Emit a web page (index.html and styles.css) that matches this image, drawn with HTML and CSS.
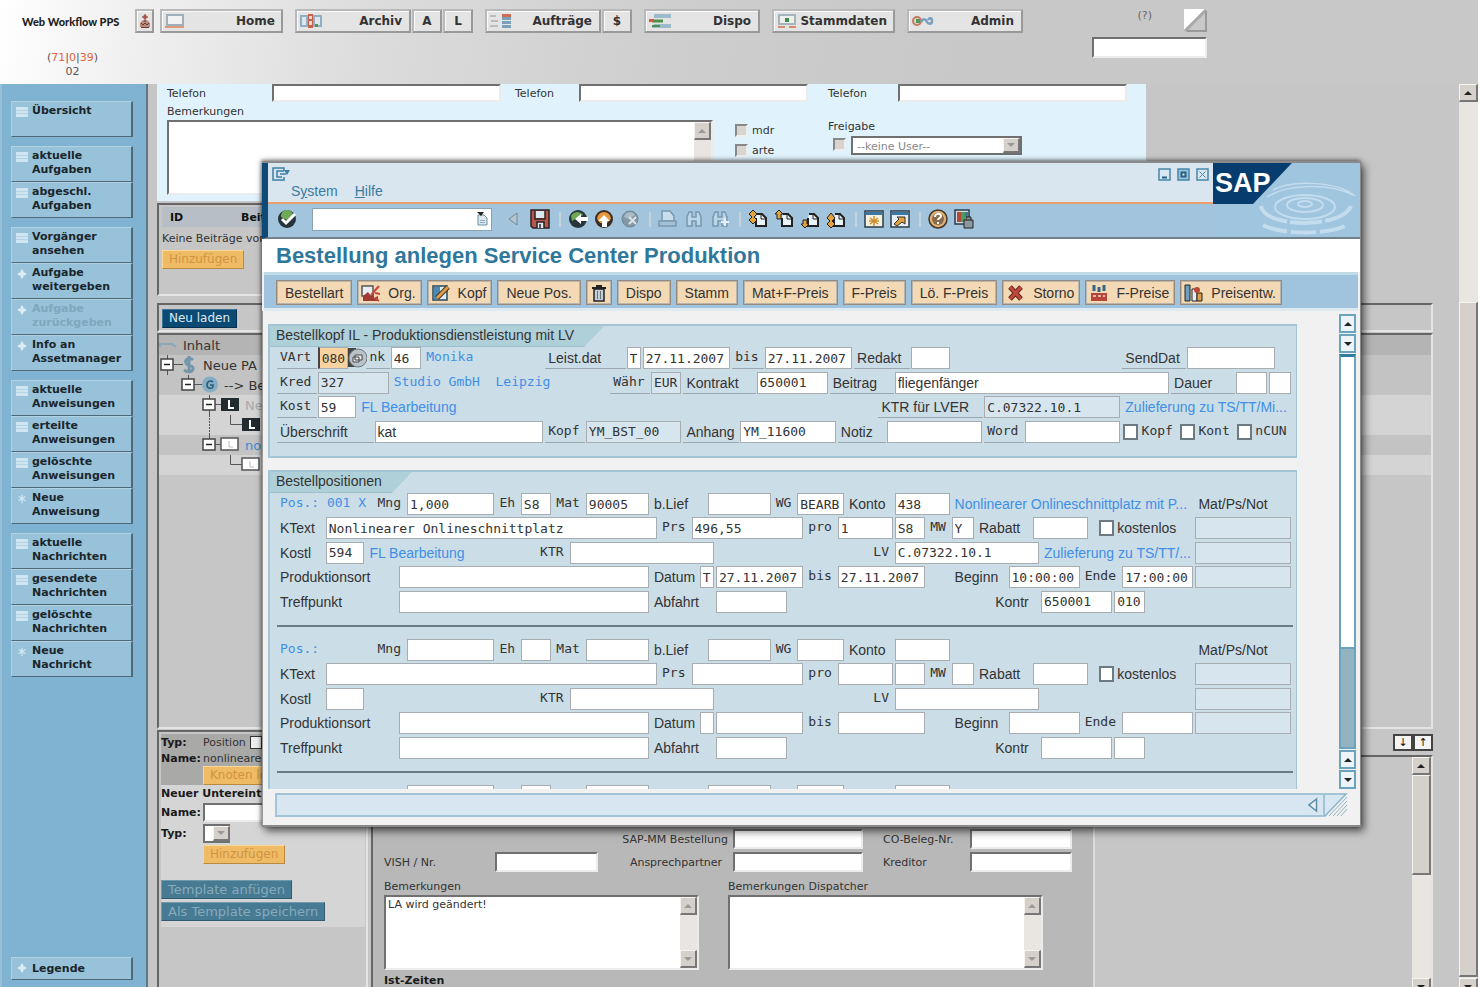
FILE: index.html
```html
<!DOCTYPE html>
<html lang="de">
<head>
    <meta charset="utf-8">
    <title>Web Workflow PPS</title>
    <link rel="stylesheet" href="styles.css">
</head>
<body>
<svg class="sprite">
    <symbol id="i-list" viewBox="0 0 12 10"><path fill="#cfe6f2" d="M0 0h12v10H0z"/><path stroke="#b2d4e6" d="M0 3.5h12M0 6.5h12"/></symbol>
    <symbol id="i-plus" viewBox="0 0 12 12"><path fill="#dcecf4" d="M5 1h2l1 3 3 1v2l-3 1-1 3H5L4 8 1 7V5l3-1z"/></symbol>
    <symbol id="i-star" viewBox="0 0 12 12"><path stroke="#d4e8f3" stroke-width="1.5" d="M6 1v10M2 3l8 5M10 3L2 8"/></symbol>
    <symbol id="a-up" viewBox="0 0 10 10"><path fill="currentColor" d="M1 7l4-4 4 4z"/></symbol>
    <symbol id="a-down" viewBox="0 0 10 10"><path fill="currentColor" d="M1 3l4 4 4-4z"/></symbol>
    <symbol id="page" viewBox="0 0 20 20"><path fill="#e9f3fa" stroke="#222" stroke-width="2" d="M9 5h5l4 4v8H8V9"/><path fill="none" stroke="#222" d="M13 5v5h5"/></symbol>
    <symbol id="binoc" viewBox="0 0 20 20"><path fill="#bcd6e7" stroke="#7698b0" stroke-width="1.5" d="M3 17V8l2-5h3v5h4V3h3l2 5v9h-5v-5H8v5z"/></symbol>
</svg>

<header class="top">
    <div class="brand">
        <h1>Web Workflow PPS</h1>
        <p>(<b>71</b>|<b>0</b>|<b>39</b>)<br>02</p>
    </div>
    <nav class="topnav">
        <button class="tb tb-icon" title="Login"><svg width="12" height="16" viewBox="0 0 12 16"><path fill="#b98a7c" d="M1 10l3-3h4l3 3v4H1z"/><path stroke="#6b3a32" fill="none" d="M6 1v8M3 4h6M2 14.500h8M2 10l2 2 2-2 2 2 2-2"/><circle cx="6" cy="4" r="2" fill="#a85248"/></svg></button>
        <div class="tb-group home">
            <button class="tb wide"><svg width="20" height="16" viewBox="0 0 20 16"><path fill="#f2f2f2" stroke="#9db0bb" stroke-width="2" d="M2 2h16v10H2z"/><path stroke="#dc9a78" stroke-width="2" d="M0 14h19"/></svg><span>Home</span></button>
        </div>
        <div class="tb-group">
            <button class="tb"><svg width="22" height="16" viewBox="0 0 22 16"><path fill="#8fb0c4" d="M0 2h22v12H0z"/><path fill="#dfe7ec" d="M2 4h4v8H2zm13 0h5v8h-5z"/><path fill="#c8604c" d="M8 1h5v14H8z"/><path fill="#f0d8d0" d="M9 3h3v3H9zm0 5h3v4H9z"/><path fill="#4b9b50" d="M15 11h3v3h-3z"/></svg><span>Archiv</span></button>
            <button class="tb tb-letter">A</button>
            <button class="tb tb-letter">L</button>
        </div>
        <div class="tb-group">
            <button class="tb"><svg width="22" height="16" viewBox="0 0 22 16"><path stroke="#bbb" stroke-width="2" d="M0 3h6M1 8h7M0 13h8"/><path fill="#7d9fb8" d="M12 4h9v11h-9z"/><path fill="#d06a55" d="M12 1h9v3h-9z"/><path stroke="#dde8ef" d="M12 7.500h9M12 11.500h9"/></svg><span>Aufträge</span></button>
            <button class="tb tb-letter">$</button>
        </div>
        <div class="tb-group">
            <button class="tb"><svg width="22" height="16" viewBox="0 0 22 16"><path fill="#9bbacb" d="M5 1h17v4H5zm0 10h17v4H3z"/><path stroke="#49914c" stroke-width="3" d="M3 8h11"/><path stroke="#49914c" stroke-width="2" d="M3 13h8"/><path fill="#d05848" d="M0 6h5v3H0z"/></svg><span>Dispo</span></button>
        </div>
        <div class="tb-group">
            <button class="tb wide"><svg width="20" height="16" viewBox="0 0 20 16"><path fill="#eee" stroke="#a4b3bc" stroke-width="2" d="M2 2h16v9H2z"/><path stroke="#d98a72" stroke-width="2" d="M1 14h7m4 0h7"/><path fill="#3d8d42" d="M8 5h4v4H8z"/></svg><span>Stammdaten</span></button>
        </div>
        <div class="tb-group">
            <button class="tb"><svg width="22" height="16" viewBox="0 0 22 16"><circle cx="5" cy="8" r="4" fill="#dcd8cc" stroke="#c47a62" stroke-width="2"/><path fill="#4b9b50" d="M4 6h4v4H4z"/><path fill="none" stroke="#7a9fc0" stroke-width="2.500" d="M9 9c3-5 5-2 6 0s5 3 5-1-3-3-4-1"/></svg><span>Admin</span></button>
        </div>
    </nav>
    <div class="top-right">
        <a class="help" href="#">(?)</a>
        <button class="corner" title="Suche"><svg width="24" height="24" viewBox="0 0 24 24"><path fill="#fff" d="M1 1h21L1 22z"/><path stroke="#a9a9a9" stroke-width="3" d="M23 2L2 23"/><path stroke="#999" stroke-width="2" d="M23 3v20H4" fill="none"/></svg></button>
        <input class="inset" type="text" aria-label="Suche">
    </div>
</header>

<div class="workspace">
    <nav class="side">
        <div class="side-group">
            <button><svg><use href="#i-list"/></svg>Übersicht<br>&nbsp;</button>
        </div>
        <div class="side-group">
            <button><svg><use href="#i-list"/></svg>aktuelle<br>Aufgaben</button>
            <button><svg><use href="#i-list"/></svg>abgeschl.<br>Aufgaben</button>
        </div>
        <div class="side-group">
            <button><svg><use href="#i-list"/></svg>Vorgänger<br>ansehen</button>
            <button><svg><use href="#i-plus"/></svg>Aufgabe<br>weitergeben</button>
            <button disabled><svg><use href="#i-plus"/></svg>Aufgabe<br>zurückgeben</button>
            <button><svg><use href="#i-plus"/></svg>Info an<br>Assetmanager</button>
        </div>
        <div class="side-group">
            <button><svg><use href="#i-list"/></svg>aktuelle<br>Anweisungen</button>
            <button><svg><use href="#i-list"/></svg>erteilte<br>Anweisungen</button>
            <button><svg><use href="#i-list"/></svg>gelöschte<br>Anweisungen</button>
            <button><svg><use href="#i-star"/></svg>Neue<br>Anweisung</button>
        </div>
        <div class="side-group">
            <button><svg><use href="#i-list"/></svg>aktuelle<br>Nachrichten</button>
            <button><svg><use href="#i-list"/></svg>gesendete<br>Nachrichten</button>
            <button><svg><use href="#i-list"/></svg>gelöschte<br>Nachrichten</button>
            <button><svg><use href="#i-star"/></svg>Neue<br>Nachricht</button>
        </div>
        <div class="side-group legend">
            <button><svg><use href="#i-plus"/></svg>Legende</button>
        </div>
    </nav>

    <main class="frames">
        <section class="contact">
            <div class="phones">
                <label for="tel1">Telefon</label><input class="inset" id="tel1" type="text">
                <label for="tel2">Telefon</label><input class="inset" id="tel2" type="text">
                <label for="tel3">Telefon</label><input class="inset" id="tel3" type="text">
            </div>
            <div class="notes">
                <div class="notes-text">
                    <label for="bem">Bemerkungen</label>
                    <div class="area inset">
                        <textarea id="bem"></textarea>
                        <div class="scroll off"><i><svg><use href="#a-up"/></svg></i><b></b><i><svg><use href="#a-down"/></svg></i></div>
                    </div>
                </div>
                <div class="notes-checks">
                    <label><input type="checkbox" class="old-check">mdr</label>
                    <label><input type="checkbox" class="old-check">arte</label>
                </div>
                <div class="notes-free">
                    <label for="free">Freigabe</label>
                    <div class="free-row">
                        <input type="checkbox" class="old-check" aria-label="Freigabe aktiv">
                        <div class="drop inset"><select id="free"><option>--keine User--</option></select><i><svg><use href="#a-down"/></svg></i></div>
                    </div>
                </div>
            </div>
        </section>

        <section class="frame articles">
            <table>
                <tr><th class="c-id">ID</th><th>Beitrag</th></tr>
                <tr><td colspan="2">Keine Beiträge vorhanden</td></tr>
            </table>
            <button class="btn-orange" disabled>Hinzufügen</button>
        </section>

        <section class="frame reload"><button class="btn-navy">Neu laden</button></section>

        <section class="frame tree">
            <div class="tree-row head"><svg width="18" height="20" viewBox="0 0 18 20"><path fill="none" stroke="#8ba7b8" stroke-width="2" d="M1 12V9h12l4 3"/></svg><span>Inhalt</span></div>
            <div class="tree-row"><svg width="38" height="20" viewBox="0 0 38 20"><path stroke="#555" d="M8.500 0v20M14 9.500h10"/><path fill="#fff" stroke="#444" stroke-width="1.500" d="M2 4h12v11H2z"/><path stroke="#222" stroke-width="1.500" d="M5 9.500h6"/><path fill="none" stroke="#7396ab" stroke-width="3" d="M34 5c-3-3-9-1-7 3s8 2 7 6-6 3-9 1M30 1v17"/></svg><span>Neue PA</span></div>
            <div class="tree-row"><svg class="ind1" width="38" height="20" viewBox="0 0 38 20"><path stroke="#555" d="M8.500 0v4M14 9.500h8"/><path fill="#fff" stroke="#444" stroke-width="1.500" d="M2 4h12v11H2z"/><path stroke="#222" stroke-width="1.500" d="M5 9.500h6"/><circle cx="30" cy="9.500" r="8" fill="#85adc4"/><path fill="none" stroke="#2b5877" stroke-width="1.500" d="M33 7c-2-2-6-1-6 3s5 4 6 2v-2h-3"/></svg><span>--&gt; Beitrag</span></div>
            <div class="tree-row light"><svg class="ind2" width="38" height="20" viewBox="0 0 38 20"><path stroke="#555" d="M8.500 0v20M14 9.500h6"/><path fill="#fff" stroke="#444" stroke-width="1.500" d="M2 4h12v11H2z"/><path stroke="#222" stroke-width="1.500" d="M5 9.500h6"/><path fill="#222b30" d="M20 3h18v13H20z"/><path fill="none" stroke="#fff" stroke-width="2" d="M28 5v8h5"/></svg><span class="dim">Neu</span></div>
            <div class="tree-row light"><svg class="ind2" width="59" height="20" viewBox="0 0 59 20"><path stroke="#555" stroke-dasharray="2 1" d="M8.500 0v20"/><path fill="none" stroke="#555" d="M29.500 0v9.500H41"/><path fill="#222b30" d="M41 3h18v13H41z"/><path fill="none" stroke="#fff" stroke-width="2" d="M49 5v8h5"/></svg></div>
            <div class="tree-row"><svg class="ind2" width="38" height="20" viewBox="0 0 38 20"><path stroke="#555" d="M8.500 0v4M14 9.500h6"/><path fill="#fff" stroke="#444" stroke-width="1.500" d="M2 4h12v11H2z"/><path stroke="#222" stroke-width="1.500" d="M5 9.500h6"/><path fill="#fff" stroke="#555" stroke-width="1.500" d="M20 3h17v12H20z"/><path fill="none" stroke="#bbb" d="M28 6v6h4"/></svg><a href="#">nonlinear</a></div>
            <div class="tree-row light"><svg class="ind3" width="38" height="20" viewBox="0 0 38 20"><path fill="none" stroke="#555" d="M8.500 0v9.500H20"/><path fill="#fff" stroke="#555" stroke-width="1.500" d="M20 3h17v12H20z"/><path fill="none" stroke="#bbb" d="M28 6v6h4"/></svg></div>
        </section>

        <div class="lower">
            <section class="frame node">
                <div class="node-form">
                    <div class="node-top">
                        <b>Typ:</b><div class="pos-line">Position <input type="checkbox" class="node-check" aria-label="Position"></div>
                        <b>Name:</b><span>nonlinearer</span>
                        <span></span><button class="btn-orange" disabled>Knoten löschen</button>
                    </div>
                    <h2>Neuer Untereintrag</h2>
                    <div class="node-new">
                        <label for="nname">Name:</label><input class="inset" id="nname" type="text">
                        <label for="ntyp">Typ:</label><div class="drop inset small"><select id="ntyp"></select><i><svg><use href="#a-down"/></svg></i></div>
                        <span></span><button class="btn-orange" disabled>Hinzufügen</button>
                    </div>
                    <button class="btn-teal" disabled>Template anfügen</button>
                    <button class="btn-teal" disabled>Als Template speichern</button>
                </div>
            </section>
            <section class="detail">
                <div class="detail-bar"><button title="runter">↓</button><button title="hoch">↑</button></div>
                <div class="frame detail-frame">
                    <div class="detail-form">
                        <div class="detail-grid">
                            <span></span><span></span>
                            <label class="r" for="mm">SAP-MM Bestellung</label><input class="inset" id="mm" type="text">
                            <label class="third" for="co">CO-Beleg-Nr.</label><input class="inset" id="co" type="text">
                            <label for="vish">VISH / Nr.</label><input class="inset" id="vish" type="text">
                            <label class="r partner" for="ap">Ansprechpartner</label><input class="inset" id="ap" type="text">
                            <label class="third" for="kr">Kreditor</label><input class="inset" id="kr" type="text">
                        </div>
                        <div class="detail-notes">
                            <div>
                                <label for="b1">Bemerkungen</label>
                                <div class="area inset"><textarea id="b1">LA wird geändert!</textarea><div class="scroll off"><i><svg><use href="#a-up"/></svg></i><b></b><i><svg><use href="#a-down"/></svg></i></div></div>
                            </div>
                            <div>
                                <label for="b2">Bemerkungen Dispatcher</label>
                                <div class="area inset"><textarea id="b2"></textarea><div class="scroll off"><i><svg><use href="#a-up"/></svg></i><b></b><i><svg><use href="#a-down"/></svg></i></div></div>
                            </div>
                        </div>
                        <h2>Ist-Zeiten</h2>
                    </div>
                    <div class="scroll inner"><i><svg><use href="#a-up"/></svg></i><em></em><b></b><i><svg><use href="#a-down"/></svg></i></div>
                </div>
            </section>
        </div>
    </main>
    <div class="scroll outer"><i><svg><use href="#a-up"/></svg></i><b></b><em></em><i><svg><use href="#a-down"/></svg></i></div>
</div>

<!-- SAP window -->
<div class="sap">
    <div class="sap-head">
        <div class="sap-menu">
            <svg class="sysicon" width="19" height="14" viewBox="0 0 19 14"><path fill="none" stroke="#3b80a6" stroke-width="1.500" d="M12 4V1H1v12h11v-3M12 4H5v6h5M8 7h6"/><path fill="#3b80a6" d="M12 3h6l-3 5z"/></svg>
            <div class="menu-items"><a href="#">S<u>y</u>stem</a><a href="#"><u>H</u>ilfe</a></div>
            <div class="winbtns">
                <button title="Minimieren"><svg width="13" height="13"><path fill="none" stroke="#4587ab" stroke-width="1.500" d="M1 1h11v11H1z"/><path stroke="#245f86" stroke-width="2" d="M4 9.500h5"/></svg></button>
                <button title="Maximieren"><svg width="13" height="13"><path fill="#9fc3d7" stroke="#4587ab" stroke-width="1.500" d="M1 1h11v11H1z"/><path fill="#e4eff5" stroke="#245f86" stroke-width="2" d="M4.500 4.500h4v4h-4z"/></svg></button>
                <button title="Schließen"><svg width="13" height="13"><path fill="none" stroke="#4587ab" stroke-width="1.500" d="M1 1h11v11H1z"/><path stroke="#4587ab" d="M3.500 3.500l6 6m0-6l-6 6"/></svg></button>
            </div>
        </div>
        <div class="sap-tools">
            <button title="Enter"><svg viewBox="0 0 20 20"><circle cx="10" cy="10" r="9" fill="#26343c"/><path fill="#6fa955" d="M4 8a6 6 0 0112-2l-6 5z"/><path fill="none" stroke="#fff" stroke-width="3" d="M5 10l4 4 9-9"/></svg></button>
            <div class="cmd"><input type="text" aria-label="Befehl"><svg width="12" height="14" viewBox="0 0 12 14"><path fill="#dce8ef" stroke="#6d8fa3" d="M2 3h6l3 3v7H2z"/><path stroke="#8fb0c3" d="M4 8.500h5M4 10.500h5"/><path fill="#222" d="M1 0h7L5 4z"/></svg></div>
            <button class="narrow" title="Zurück"><svg viewBox="0 0 10 20"><path fill="#b6c5ce" stroke="#6f8796" d="M9 4v12L1 10z"/></svg></button>
            <button title="Sichern"><svg viewBox="0 0 20 20"><path fill="#b8574c" stroke="#2a2222" stroke-width="1.500" d="M1 1h18v18H3l-2-2z"/><path fill="#dce8ef" d="M5 2h10v7H5zm2 11h7v6H7z"/><path stroke="#2a2222" stroke-width="1.500" fill="none" d="M5 2v8h10V2M7 19v-6h7v6M10 15v4"/></svg></button>
            <s></s>
            <button title="Zurück"><svg viewBox="0 0 20 20"><circle cx="10" cy="10" r="9" fill="#26343c"/><path fill="#6fa955" d="M3 7a7 7 0 0112-1L9 9l-5 3z"/><path fill="#fff" d="M7 10l6-5v3h7v4h-7v3z"/></svg></button>
            <button title="Beenden"><svg viewBox="0 0 20 20"><circle cx="10" cy="10" r="9" fill="#3a2c22"/><path fill="#e8963c" d="M3 10a7 7 0 0114 0l-4 4H6z"/><path fill="#fff" d="M10 6l6 6h-3v6H8v-6H4z"/></svg></button>
            <button title="Abbrechen"><svg viewBox="0 0 20 20"><circle cx="10" cy="10" r="8" fill="#8498a5" stroke="#6f8796"/><path fill="#a9bcc7" d="M4 8a6 6 0 0111-2l-6 4z"/><path stroke="#d8e4eb" stroke-width="2" d="M9 8l7 7m0-7l-7 7"/></svg></button>
            <s></s>
            <button title="Drucken"><svg viewBox="0 0 20 20"><path fill="#c9deeb" stroke="#7698b0" stroke-width="1.500" d="M4 2h8l4 5v5H4z"/><path fill="#a5c1d3" stroke="#7698b0" stroke-width="1.500" d="M1 12h17v5H1z"/></svg></button>
            <button title="Suchen"><svg><use href="#binoc"/></svg></button>
            <button title="Weitersuchen"><svg viewBox="0 0 20 20"><use href="#binoc" width="20" height="20"/><path stroke="#e4f0f7" stroke-width="2" d="M15 9v8m-4-4h8"/></svg></button>
            <s></s>
            <button title="Erste Seite"><svg viewBox="0 0 20 20"><use href="#page" width="20" height="20"/><path fill="#e5a33c" stroke="#222" d="M5 1l4 4-3 3 3 3-4 4-4-4 3-3-3-3z"/></svg></button>
            <button title="Vorige Seite"><svg viewBox="0 0 20 20"><use href="#page" width="20" height="20"/><path fill="#e5a33c" stroke="#222" d="M5 1l4 4H7v5H3V5H1z"/></svg></button>
            <button title="Nächste Seite"><svg viewBox="0 0 20 20"><use href="#page" width="20" height="20"/><path fill="#e5a33c" stroke="#222" d="M5 19l4-4H7v-4H3v4H1z"/></svg></button>
            <button title="Letzte Seite"><svg viewBox="0 0 20 20"><use href="#page" width="20" height="20"/><path fill="#e5a33c" stroke="#222" d="M5 19l4-4-3-3 3-3-4-5-4 5 3 3-3 3z"/></svg></button>
            <s></s>
            <button title="Neuer Modus"><svg viewBox="0 0 20 20"><path fill="#f4f0df" stroke="#2b3d4a" stroke-width="1.500" d="M1 2h18v16H1z"/><path fill="#3b78a5" d="M2 3h16v3H2z"/><path stroke="#d58c2c" stroke-width="1.500" d="M10 7v10M5 12h10M6 9l8 6m0-6l-8 6"/></svg></button>
            <button title="Verknüpfung"><svg viewBox="0 0 20 20"><path fill="#e5eef4" stroke="#2b3d4a" stroke-width="1.500" d="M1 2h18v16H1z"/><path fill="#3b78a5" d="M2 3h16v3H2z"/><path fill="#e5a33c" stroke="#333" d="M7 8h8v7l-3-2-5 4-3-2 5-5z"/></svg></button>
            <s></s>
            <button title="Hilfe"><svg viewBox="0 0 20 20"><circle cx="10" cy="10" r="9" fill="#e0b070" stroke="#40362c" stroke-width="1.500"/><circle cx="10" cy="10" r="6" fill="#8a6a4c"/><path fill="none" stroke="#fff" stroke-width="2" d="M7 8c0-4 6-4 6-1 0 2-3 2-3 4m0 2v2"/></svg></button>
            <button title="Layout"><svg viewBox="0 0 20 20"><path fill="#cfdde6" stroke="#2b3d4a" stroke-width="1.500" d="M1 1h14v14H1z"/><path fill="#b4463c" d="M3 3h4v10H3z"/><path fill="#4a9a58" d="M7 3h4v10H7z"/><path fill="#3b78a5" d="M11 3h3v5h-3z"/><path fill="#8b98a0" stroke="#222" d="M10 11h9v8h-9zm2 0V8h5v3"/></svg></button>
        </div>
        <div class="ripple">
            <svg width="147" height="74" viewBox="0 0 147 74" preserveAspectRatio="xMaxYMin slice">
                <path fill="#a0c5df" d="M0 41h40L79 0h68v74H0z"/>
                <path fill="#063d6e" d="M0 0h79L40 41H0z"/>
                <g fill="none" stroke="#d3e8f5" opacity=".7">
                    <ellipse cx="92" cy="41" rx="7" ry="3" stroke-width="2"/>
                    <ellipse cx="92" cy="42" rx="18" ry="7" stroke-width="2"/>
                    <ellipse cx="92" cy="44" rx="30" ry="12" stroke-width="2"/>
                    <path stroke-width="4" stroke-dasharray="32 3" d="M48 43c4 22 80 23 90 0"/>
                    <path stroke-width="4" stroke-dasharray="25 4" d="M50 62c18 10 66 10 84 0"/>
                    <path stroke-width="1.500" d="M60 27c20-11 66-8 82 6M54 34c18-12 60-15 86-2"/>
                </g>
            </svg>
            <span>SAP</span>
        </div>
    </div>
    <h2 class="sap-title">Bestellung anlegen Service Center Produktion</h2>
    <div class="sap-actions">
        <button>Bestellart</button>
        <button class="ic"><svg viewBox="0 0 20 18"><path fill="#e8eef2" stroke="#555" stroke-width="1.500" d="M1 2h11v10H1z"/><path fill="#9f3a34" d="M2 12l5-4 3 4 3-2v4l4-2v5H2z"/><path stroke="#c9463c" stroke-width="2" d="M10 11l8-9M14 9l5 1M14 14l4 3"/></svg>Org.</button>
        <button class="ic"><svg viewBox="0 0 20 18"><path fill="#dfeaf2" stroke="#2d4758" stroke-width="1.500" d="M2 2h14v14H2z"/><path fill="#4d8ab0" d="M3 3h6v12H3z"/><path stroke="#333" stroke-width="5" d="M6 14L17 3"/><path stroke="#e69a42" stroke-width="3" d="M6 14L17 3"/></svg>Kopf</button>
        <button>Neue Pos.</button>
        <button class="only" title="Löschen"><svg viewBox="0 0 16 18"><path fill="#c2cdd4" stroke="#222" stroke-width="1.500" d="M3 5h10v12H3z"/><path stroke="#222" stroke-width="2" d="M1 4h14M5 2h6"/><path stroke="#6a7881" d="M6.500 7v8m3-8v8"/></svg></button>
        <button>Dispo</button>
        <button>Stamm</button>
        <button>Mat+F-Preis</button>
        <button>F-Preis</button>
        <button>Lö. F-Preis</button>
        <button class="ic"><svg viewBox="0 0 18 18"><path stroke="#5c2a24" stroke-width="5" d="M3 3l11 12M14 3L3 15"/><path stroke="#c0483a" stroke-width="3" d="M3 3l11 12M14 3L3 15"/></svg>Storno</button>
        <button class="ic"><svg viewBox="0 0 20 18"><path fill="#b8453c" d="M2 9h16v8H2z"/><path fill="#e7b4a8" d="M4 11h3v2H4zm5 0h3v2H9zm5 0h2v2h-2z"/><path stroke="#33668a" stroke-width="3" d="M5 1v6m5-4v5M15 1v6"/></svg>F-Preise</button>
        <button class="ic"><svg viewBox="0 0 20 18"><path fill="#6f9fbe" stroke="#222" d="M1 1h5v16H1z"/><path fill="#e8eef2" stroke="#222" d="M8 5h5v12H8z"/><path fill="#d8a04c" stroke="#222" d="M13 9h5v8h-5z"/><circle cx="13" cy="6" r="3" fill="#c0483a"/></svg>Preisentw.</button>
    </div>
    <div class="sap-content">
        <div class="panels">
            <section class="panel panel-head">
                <h3>Bestellkopf IL - Produktionsdienstleistung mit LV</h3>
                <div class="rows head-rows" id="head"></div>
            </section>
            <section class="panel">
                <h3>Bestellpositionen</h3>
                <div id="positions"></div>
            </section>
        </div>
        <div class="sap-scroll">
            <i><svg><use href="#a-up"/></svg></i><i><svg><use href="#a-down"/></svg></i>
            <b></b><em></em>
            <i><svg><use href="#a-up"/></svg></i><i><svg><use href="#a-down"/></svg></i>
        </div>
    </div>
    <div class="sap-status">
        <div class="status-line"><svg width="10" height="16" viewBox="0 0 10 16"><path fill="#e6f0f6" stroke="#5f8ba5" stroke-width="1.500" d="M8.500 2v12L1 8z"/></svg></div>
        <svg class="grip" width="25" height="24" viewBox="0 0 25 24"><path fill="#d7e6f0" stroke="#8db6cd" stroke-width="1.500" d="M1 1h22L2 23H1z"/><path stroke="#8fb0c3" d="M6 23L24 4M10 23L24 8M14 23l10-11M18 23l6-7"/></svg>
    </div>
</div>
<script src="script.js"></script>
</body>
</html>
```
FILE: styles.css
```css
* {
    box-sizing: border-box;
}
body {
    margin: 0;
    height: 100vh;
    overflow: hidden;
    display: flex;
    flex-direction: column;
    position: relative;
    padding-right: 2px;
    background: #fff;
    font-family: "DejaVu Sans", Verdana, sans-serif;
    font-size: 11px;
    color: #333;
}
button, input, select, textarea {
    font: inherit;
    color: inherit;
    margin: 0;
    border-radius: 0;
}
button {
    padding: 0;
    border: 0;
    background: none;
}
input, textarea, select {
    min-width: 0;
    outline: 0;
}
h1, h2, h3, p {
    margin: 0;
}
.sprite {
    position: absolute;
    width: 0;
    height: 0;
}
.inset {
    border: 2px solid;
    border-color: #707070 #ececec #ececec #707070;
    background: #fff;
    padding: 0 2px;
}

/* header */
.top {
    height: 84px;
    flex: none;
    display: flex;
    background: linear-gradient(98deg, #fff 0, #f0f0f0 9%, #dcdcdc 25%, #cecece 45%, #c8c8c8 65%);
}
.brand {
    width: 135px;
    padding: 13px 0 0 22px;
}
.brand h1 {
    font: 900 11px/17px Lato, sans-serif;
    white-space: nowrap;
    color: #222;
}
.brand p {
    margin-top: 21px;
    padding-right: 12px;
    text-align: center;
    line-height: 14px;
    color: #555;
}
.brand p b {
    font-weight: normal;
    color: #e8623c;
}
.topnav {
    display: flex;
    align-items: flex-start;
    gap: 12px;
    padding-top: 9px;
}
.tb-group {
    display: flex;
    gap: 1px;
}
.tb {
    height: 24px;
    width: 116px;
    display: flex;
    align-items: center;
    justify-content: space-between;
    padding: 0 7px 0 3px;
    border: 2px solid;
    border-color: #b9b9b9 #999 #999 #b9b9b9;
    box-shadow: inset 1px 1px #fafafa;
    background: #e4e4e4;
    font-size: 12px;
    font-weight: bold;
}
.tb.wide {
    width: 123px;
    padding-right: 6px;
}
.tb-letter {
    width: 30px;
    padding: 0;
    justify-content: center;
}
.tb-icon {
    width: 19px;
    padding: 0;
    justify-content: center;
    margin-right: -6px;
}
.top-right {
    width: 115px;
    margin-left: 69px;
    padding-top: 8px;
    display: flex;
    flex-wrap: wrap;
    justify-content: flex-end;
    align-content: flex-start;
    row-gap: 5px;
}
.help {
    color: #666;
    text-decoration: none;
    line-height: 16px;
    margin-right: 31px;
}
.corner {
    width: 24px;
    height: 24px;
}
.corner svg {
    display: block;
}
.top-right .inset {
    width: 115px;
    height: 21px;
}

.workspace {
    flex: 1;
    min-height: 0;
    display: flex;
    background: #c6c6c6;
}

/* sidebar */
.side {
    width: 148px;
    flex: none;
    display: flex;
    flex-direction: column;
    gap: 9px;
    padding: 17px 13px 7px 9px;
    background: #80b3d2;
    border-left: 2px solid #98c1d9;
    border-right: 2px solid #5f7887;
}
.side-group button {
    position: relative;
    display: block;
    width: 122px;
    height: 36px;
    padding: 2px 0 5px 20px;
    border: 1px solid;
    border-color: #b0d2e2 #4e6a78 #4e6a78 #b0d2e2;
    border-right-width: 2px;
    background: #97c2d9;
    text-align: left;
    font-weight: bold;
    line-height: 14px;
    color: #1b262c;
}
.side-group button svg {
    position: absolute;
    left: 4px;
    top: 5px;
    width: 12px;
    height: 10px;
}
.side-group button:disabled {
    color: #7ea7bd;
}
.legend {
    margin-top: auto;
}
.side-group.legend button {
    height: 23px;
    padding: 0 0 0 20px;
}

/* frames */
.frames {
    flex: 1;
    min-width: 0;
    padding: 0 26px 0 9px;
    display: flex;
    flex-direction: column;
}
.frame {
    border: 2px solid;
    border-color: #666 #e4e4e4 #e4e4e4 #666;
}
.contact {
    max-width: 989px;
    height: 117px;
    flex: none;
    padding: 0 19px 6px 10px;
    background: #e0f3fd;
    display: flex;
    flex-direction: column;
}
.phones {
    display: grid;
    grid-template-columns: 105px 1fr 78px 1fr 90px 1fr;
    align-items: center;
}
.phones label:nth-of-type(2) {
    padding-left: 14px;
}
.phones label:nth-of-type(3) {
    padding-left: 20px;
}
.phones input {
    height: 18px;
}
.notes {
    flex: 1;
    display: flex;
    padding-top: 2px;
}
.notes-text {
    flex: 0 1 546px;
    display: flex;
    flex-direction: column;
    line-height: 16px;
}
.notes-checks {
    width: 115px;
    padding: 16px 0 0 22px;
}
.notes-checks label {
    display: flex;
    align-items: center;
    gap: 4px;
    height: 20px;
}
.old-check {
    appearance: none;
    width: 13px;
    height: 13px;
    border: 2px solid;
    border-color: #888 #eee #eee #888;
    background: #d8d4ce;
}
.notes-free {
    padding-top: 14px;
    line-height: 17px;
}
.free-row {
    display: flex;
    gap: 5px;
    padding: 1px 0 0 5px;
}
.free-row .old-check {
    margin-top: 2px;
}
.drop {
    display: flex;
    width: 171px;
    height: 19px;
    padding: 0;
    border-color: #707070;
}
.drop select {
    flex: 1;
    appearance: none;
    border: 0;
    background: #fff;
    padding: 0 4px;
    color: #8a8a8a;
}
.area {
    flex: 1;
    display: flex;
    min-height: 0;
    padding: 0;
}
.area textarea {
    flex: 1;
    border: 0;
    padding: 1px 2px;
    resize: none;
    background: #fff;
    line-height: 14px;
}

/* old windows scrollbars */
.scroll {
    width: 17px;
    display: flex;
    flex-direction: column;
    background: #e9e5e1;
    color: #222;
}
.scroll b {
    flex: 1;
}
.scroll i, .scroll em, .drop i {
    flex: none;
    border: 1px solid;
    border-color: #f6f4f0 #777 #777 #f6f4f0;
    border-right-width: 2px;
    border-bottom-width: 2px;
    background: #d5d1ca;
}
.scroll i, .drop i {
    height: 18px;
    display: flex;
    align-items: center;
    justify-content: center;
}
.scroll i svg, .drop i svg {
    width: 10px;
    height: 10px;
}
.drop i {
    width: 17px;
    height: 15px;
    color: #999;
}
.off {
    color: #999;
}
.outer {
    width: 19px;
}
.outer b {
    flex: 0 0 200px;
}
.outer em {
    flex: 1;
    margin-bottom: 1px;
}
.outer i:last-child {
    margin-bottom: -9px;
}
.inner {
    width: 19px;
}
.inner em {
    height: 100px;
}
.inner i:last-child {
    margin-bottom: -9px;
}

.articles {
    max-width: 989px;
    height: 93px;
    flex: none;
    margin: 2px 0 7px;
    padding: 2px 3px;
}
.articles table {
    width: 100%;
    border-collapse: collapse;
}
.articles th {
    height: 20px;
    padding: 0 8px;
    text-align: left;
    background: #b7bec5;
    color: #111;
}
.articles .c-id {
    width: 71px;
}
.articles td {
    height: 23px;
    padding: 0;
}
.btn-orange, .btn-navy, .btn-teal {
    display: block;
    height: 19px;
    padding: 0 6px;
    border: 1px solid;
    white-space: nowrap;
    font-size: 12px;
    line-height: 15px;
}
.btn-orange {
    background: #efbb65;
    border-color: #f8d79b #b98b42 #b98b42 #f8d79b;
    color: #cf9442;
}
.btn-navy {
    background: #0b4a74;
    border-color: #3f7396 #062f4c #062f4c #3f7396;
    color: #dfeaf2;
}
.btn-teal {
    background: #477a93;
    border-color: #6f99ad #2f5a70 #2f5a70 #6f99ad;
    color: #86abbb;
    font-size: 13px;
}
.reload {
    height: 29px;
    flex: none;
    padding: 4px 3px;
}
.tree {
    flex: 1;
    min-height: 0;
    margin-top: 1px;
    font-size: 13px;
}
.tree-row {
    height: 20px;
    display: flex;
    align-items: center;
    gap: 6px;
    background: #c3c3c3;
}
.tree-row.head {
    background: #b4b4b4;
}
.tree-row.light {
    background: #d4d4d4;
}
.tree-row .ind1 { margin-left: 21px; }
.tree-row .ind2 { margin-left: 42px; }
.tree-row .ind3 { margin-left: 63px; }
.tree-row a {
    color: #3d8ad0;
    text-decoration: none;
}
.dim {
    color: #aaa;
}

.lower {
    height: 257px;
    flex: none;
    margin-top: 1px;
    display: flex;
    gap: 3px;
}
.node {
    width: 211px;
    border-bottom: 0;
    padding: 2px 1px 0 2px;
}
.node-form {
    background: #d5d5d5;
    padding-bottom: 3px;
}
.node-top, .node-new {
    display: grid;
    grid-template-columns: 42px 1fr;
    justify-items: start;
    align-items: center;
}
.node-top {
    width: 190px;
    background: #a9a9a7;
    grid-template-rows: 17px 15px 19px;
}
.node b, .node h2, .node label, .detail h2 {
    font-size: 11px;
    font-weight: bold;
    color: #1a1a1a;
}
.pos-line {
    display: flex;
    align-items: center;
    gap: 4px;
}
.node-check {
    appearance: none;
    width: 12px;
    height: 13px;
    border: 1px solid #333;
    background: #eee;
}
.node h2 {
    line-height: 17px;
}
.node-new {
    grid-template-rows: 20px 22px 20px;
    margin-bottom: 16px;
}
.node-new .inset {
    width: 140px;
    height: 19px;
}
.node-new .drop.small {
    width: 27px;
}
.node .btn-teal {
    margin-bottom: 3px;
}
.detail {
    flex: 1;
    min-width: 0;
    display: flex;
    flex-direction: column;
}
.detail-bar {
    height: 25px;
    display: flex;
    justify-content: flex-end;
    align-items: flex-start;
    padding-top: 4px;
}
.detail-bar button {
    width: 20px;
    height: 17px;
    border: 2px solid #444;
    background: #f4f4f4;
    line-height: 12px;
    color: #111;
}
.detail-frame {
    flex: 1;
    min-height: 0;
    display: flex;
    justify-content: space-between;
    border-bottom: 0;
}
.detail-form {
    flex: 0 1 722px;
    padding: 72px 18px 0 11px;
    background: #b8b8b8;
    border-right: 2px solid #dcdcdc;
}
.detail-grid {
    display: grid;
    grid-template-columns: 111px 103px 135px 130px 107px 102px;
    grid-auto-rows: 20px;
    row-gap: 3px;
    align-items: center;
}
.detail-grid input {
    height: 20px;
}
.detail-grid .r {
    text-align: right;
    padding-right: 5px;
    white-space: nowrap;
}
.detail-grid .partner {
    padding-right: 11px;
}
.detail-grid .third {
    padding-left: 20px;
}
.detail-notes {
    display: flex;
    gap: 29px;
    margin-top: 7px;
}
.detail-notes > div {
    width: 315px;
}
.detail-notes label {
    display: block;
    line-height: 16px;
}
.detail-notes .area {
    height: 75px;
}
.detail h2 {
    margin-top: 5px;
    line-height: 12px;
}

/* SAP window */
.sap {
    position: absolute;
    left: 262px;
    right: 119px;
    top: 161px;
    bottom: 160px;
    display: flex;
    flex-direction: column;
    border: 1px solid #8a8a8a;
    border-width: 2px 1px 2px 0;
    background: #f1f1f1;
    box-shadow: 3px 4px 8px rgba(0, 0, 0, .6), -1px -1px 4px rgba(0, 0, 0, .5);
    font-family: "Liberation Sans", Arial, sans-serif;
    font-size: 14px;
    color: #333;
}
.sap-head {
    position: relative;
    border-left: 6px solid #0f4a76;
    border-bottom: 2px solid #70818c;
}
.sap-menu {
    height: 41px;
    display: flex;
    background: #d9e6ef;
    border-bottom: 2px solid #eba06c;
    padding: 4px 151px 0 4px;
}
.menu-items {
    flex: 1;
    display: flex;
    gap: 17px;
    padding-top: 16px;
}
.menu-items a {
    color: #3a7b9f;
    text-decoration: none;
    line-height: 16px;
}
.winbtns {
    display: flex;
    gap: 6px;
    padding-top: 1px;
}
.winbtns button {
    height: 13px;
}
.winbtns svg {
    display: block;
}
.sap-tools {
    height: 33px;
    display: flex;
    align-items: center;
    padding: 0 0 3px 9px;
    background: #a2c5dd;
}
.sap-tools button {
    width: 20px;
    height: 20px;
    margin-right: 6px;
}
.sap-tools .narrow {
    width: 10px;
    margin: 0 12px 0 16px;
}
.sap-tools svg {
    display: block;
    width: 100%;
    height: 100%;
}
.sap-tools s {
    width: 2px;
    height: 15px;
    margin: 0 7px 0 3px;
    background: #c3d2db;
}
.cmd {
    display: flex;
    align-items: center;
    width: 180px;
    height: 23px;
    margin-left: 9px;
    padding-right: 3px;
    border: 1px solid #8aa3b1;
    background: #fff;
}
.cmd input {
    flex: 1;
    border: 0;
    background: none;
}
.sap-tools .cmd svg {
    width: 12px;
    height: 14px;
}
.ripple {
    position: absolute;
    right: 0;
    top: 0;
    width: 147px;
    height: 74px;
    overflow: hidden;
}
.ripple svg {
    display: block;
}
.ripple span {
    position: absolute;
    left: 2px;
    top: 5px;
    font-size: 27px;
    font-weight: bold;
    line-height: 31px;
    color: #fff;
}
.sap-title {
    height: 33px;
    padding-left: 14px;
    background: #fff;
    font-size: 22px;
    line-height: 33px;
    color: #30789b;
}
.sap-actions {
    display: flex;
    gap: 5px;
    height: 39px;
    padding: 5px 0 3px 12px;
    margin: 0 2px;
    border-top: 3px solid #bfdbe8;
    border-bottom: 3px solid #deeaf0;
    background: #a0c4de;
}
.sap-actions button {
    display: flex;
    align-items: center;
    height: 25px;
    padding: 0 8px;
    border: 1px solid #968b80;
    outline: 1px solid #b9b5ac;
    outline-offset: -2px;
    background: #f4d9b5;
    white-space: nowrap;
}
.sap-actions svg {
    width: 20px;
    height: 18px;
}
.sap-actions .ic {
    padding: 0 5px 0 3px;
    gap: 7px;
}
.sap-actions .only {
    padding: 0 2px;
}
.sap-content {
    flex: 1;
    min-height: 0;
    display: flex;
    padding: 0 4px 0 6px;
    border-left: 1px solid #999;
}
.panels {
    flex: 1;
    min-width: 0;
    overflow: hidden;
    padding-top: 13px;
    margin-right: 42px;
    margin-left: -1px;
}
.panel {
    border: 2px solid #a3c5d5;
    border-right-width: 1px;
    background: #cbdde7;
    padding: 0 3px 0 7px;
}
.panel-head {
    margin-bottom: 12px;
    padding-bottom: 11px;
}
.panel h3 {
    display: inline-block;
    height: 21px;
    margin: 0 0 0 -7px;
    padding: 0 30px 0 6px;
    border-bottom: 1px solid #9dbfcc;
    background: #b0d0d9;
    clip-path: polygon(0 0, 100% 0, calc(100% - 20px) 100%, 0 100%);
    font-size: 14px;
    font-weight: normal;
    line-height: 19px;
    vertical-align: top;
}
/* one column per character cell of the dynpro */
.rows {
    display: grid;
    grid-template-columns: repeat(125, minmax(0, 1fr));
    grid-template-rows: repeat(5, 1fr);
    height: 122px;
}
.head-rows {
    grid-template-rows: repeat(4, 1fr);
    height: 98px;
}
.rows + hr {
    height: 2px;
    margin: 10px 0 12px;
    border: 0;
    background: #6c7a83;
}
.rows label, .rows .txt, .rows .hint {
    height: 22px;
    padding-left: 3px;
    line-height: 22px;
    white-space: nowrap;
}
.rows .mono {
    font: 13px/20px "DejaVu Sans Mono", monospace;
}
.head-rows .line {
    margin-right: 1px;
    border-bottom: 1px solid #9aa7af;
}
.rows .hint {
    color: #3f8fe6;
    white-space: pre;
}
.rows .f {
    height: 22px;
    margin-right: 2px;
    padding: 0 1px 0 2px;
    border: 1px solid #a7adb1;
    background: #fff;
}
.rows .f.ro {
    background: #d7e5ee;
}
.rows .f.focus {
    background: #f8d3a1;
    border-left: 2px solid #444;
}
.rows .cb {
    appearance: none;
    width: 15px;
    height: 16px;
    margin: 3px 0 0 1px;
    border: 2px solid #6d7a82;
    background: #fff;
}
.rows .f4 {
    z-index: 1;
    width: 19px;
    height: 20px;
    margin: 1px 0 0 -2px;
}
.rows .f4 svg {
    display: block;
}
.sap-scroll {
    width: 17px;
    display: flex;
    flex-direction: column;
    gap: 1px;
    padding-top: 3px;
}
.sap-scroll i {
    height: 19px;
    display: flex;
    align-items: center;
    justify-content: center;
    border: 2px solid #6ba3bf;
    background: #edf4f8;
    color: #222;
}
.sap-scroll i svg {
    width: 10px;
    height: 10px;
}
.sap-scroll b {
    flex: 1;
    border: 2px solid #6ba3bf;
    border-top: 3px solid #2f7ea0;
    border-bottom: 0;
    background: #fff;
}
.sap-scroll em {
    height: 102px;
    margin-top: -1px;
    border: 2px solid #6ba3bf;
    background: #94b3c1;
}
.sap-status {
    display: flex;
    padding: 4px 12px 8px 12px;
    border-left: 1px solid #999;
}
.status-line {
    flex: 1;
    height: 24px;
    display: flex;
    align-items: center;
    justify-content: flex-end;
    padding-right: 5px;
    border: 2px solid #a1c4d6;
    border-right: 0;
    background: #d7e6f0;
}
.grip {
    display: block;
}
```
FILE: script.js
```js
// Cell layout of the dynpro: [type, column, text or width, value]
// L = label, M = label in the fixed font, F = field, R = read-only field,
// H = hint text, HM = hint in the fixed font, C = checkbox
const headRows = [
    [['M', 0, 'VArt'], ['F', 5, 4, '080', 'focus'], ['F4', 9], ['M', 11, 'nk'], ['F', 14, 4, '46'], ['HM', 18, 'Monika'],
     ['L', 33, 'Leist.dat'], ['F', 43, 2, 'T'], ['F', 45, 11, '27.11.2007'], ['M', 56, 'bis'], ['F', 60, 11, '27.11.2007'],
     ['L', 71, 'Redakt'], ['F', 78, 5], ['L', 104, 'SendDat'], ['F', 112, 11]],
    [['M', 0, 'Kred'], ['R', 5, 9, '327'], ['HM', 14, 'Studio GmbH  Leipzig'], ['M', 41, 'Währ'], ['R', 46, 4, 'EUR'],
     ['L', 50, 'Kontrakt'], ['F', 59, 9, '650001'], ['L', 68, 'Beitrag'], ['F', 76, 34, 'fliegenfänger', 'prop'],
     ['L', 110, 'Dauer'], ['F', 118, 4], ['F', 122, 3]],
    [['M', 0, 'Kost'], ['F', 5, 5, '59'], ['H', 10, 'FL Bearbeitung'], ['L', 74, 'KTR für LVER'], ['R', 87, 17, 'C.07322.10.1'],
     ['H', 104, 'Zulieferung zu TS/TT/Mi...']],
    [['L', 0, 'Überschrift'], ['F', 12, 21, 'kat', 'prop'], ['M', 33, 'Kopf'], ['R', 38, 12, 'YM_BST_00'], ['L', 50, 'Anhang'],
     ['F', 57, 12, 'YM_11600'], ['L', 69, 'Notiz'], ['F', 75, 12], ['M', 87, 'Word'], ['F', 92, 12],
     ['C', 104, 'Kopf'], ['C', 111, 'Kont'], ['C', 118, 'nCUN']]
];

function positionRows(p) {
    return [
        [['HM', 0, p.pos], ['M', 12, 'Mng'], ['F', 16, 11, p.mng], ['M', 27, 'Eh'], ['F', 30, 4, p.eh], ['M', 34, 'Mat'], ['F', 38, 8, p.mat],
         ['L', 46, 'b.Lief'], ['F', 53, 8], ['M', 61, 'WG'], ['F', 64, 6, p.wg], ['L', 70, 'Konto'], ['F', 76, 7, p.konto],
         ['H', 83, p.kontoText], ['L', 113, 'Mat/Ps/Not']],
        [['L', 0, 'KText'], ['F', 6, 41, p.text], ['M', 47, 'Prs'], ['F', 51, 14, p.preis], ['M', 65, 'pro'], ['F', 69, 7, p.pro], ['F', 76, 4, p.eh],
         ['M', 80, 'MW'], ['F', 83, 3, p.mw], ['L', 86, 'Rabatt'], ['F', 93, 7], ['C', 101, 'kostenlos', 'prop'], ['R', 113, 12]],
        [['L', 0, 'Kostl'], ['F', 6, 5, p.kostl], ['H', 11, p.kostlText], ['M', 32, 'KTR'], ['F', 36, 18], ['M', 73, 'LV'], ['F', 76, 18, p.lv],
         ['H', 94, p.lvText], ['R', 113, 12]],
        [['L', 0, 'Produktionsort'], ['F', 15, 31], ['L', 46, 'Datum'], ['F', 52, 2, p.typ], ['F', 54, 11, p.von], ['M', 65, 'bis'], ['F', 69, 11, p.bis],
         ['L', 83, 'Beginn'], ['F', 90, 9, p.beginn], ['M', 99, 'Ende'], ['F', 104, 9, p.ende], ['R', 113, 12]],
        [['L', 0, 'Treffpunkt'], ['F', 15, 31], ['L', 46, 'Abfahrt'], ['F', 54, 9], ['L', 88, 'Kontr'], ['F', 94, 9, p.kontr], ['F', 103, 4, p.kontr2]]
    ];
}

const positions = [
    { pos: 'Pos.: 001 X', mng: '1,000', eh: 'S8', mat: '90005', wg: 'BEARB', konto: '438',
      kontoText: 'Nonlinearer Onlineschnittplatz mit P...', text: 'Nonlinearer Onlineschnittplatz',
      preis: '496,55', pro: '1', mw: 'Y', kostl: '594', kostlText: 'FL Bearbeitung', lv: 'C.07322.10.1',
      lvText: 'Zulieferung zu TS/TT/...', typ: 'T', von: '27.11.2007', bis: '27.11.2007',
      beginn: '10:00:00', ende: '17:00:00', kontr: '650001', kontr2: '010' },
    { pos: 'Pos.:' },
    { pos: 'Pos.:' }
];

let nextId = 1;

function renderRows(target, rows) {
    rows.forEach((row, r) => {
        let label = null;
        const place = (el, col, span) => {
            el.style.gridArea = (r + 1) + ' / ' + (col + 1) + ' / auto / span ' + span;
            target.appendChild(el);
        };
        row.forEach((cell, i) => {
            const [type, col, arg, value, extra] = cell;
            const end = i + 1 < row.length ? row[i + 1][1] : 125;
            if (type === 'L' || type === 'M') {
                const follows = row[i + 1] && /^[FR]$/.test(row[i + 1][0]);
                label = document.createElement(follows ? 'label' : 'span');
                label.textContent = arg;
                label.className = 'txt' + (type === 'M' ? ' mono' : '') + (follows ? ' line' : '');
                if (follows) label.htmlFor = 'f' + nextId;
                place(label, col, end - col);
            } else if (type === 'H' || type === 'HM') {
                if (!arg) return;
                const el = document.createElement('span');
                el.textContent = arg;
                el.className = 'hint' + (type === 'HM' ? ' mono' : '');
                place(el, col, end - col);
            } else if (type === 'F' || type === 'R') {
                const el = document.createElement('input');
                el.type = 'text';
                el.id = 'f' + nextId++;
                el.value = value && value !== 'prop' ? value : '';
                el.readOnly = type === 'R';
                el.className = 'f' + (type === 'R' ? ' ro' : '') + (extra === 'prop' ? '' : ' mono') + (extra === 'focus' ? ' focus' : '');
                if (label) el.setAttribute('aria-label', label.textContent);
                place(el, col, arg);
            } else if (type === 'C') {
                const el = document.createElement('input');
                el.type = 'checkbox';
                el.className = 'cb';
                el.id = 'f' + nextId;
                place(el, col, 2);
                const text = document.createElement('label');
                text.htmlFor = 'f' + nextId++;
                text.textContent = arg;
                text.className = value === 'prop' ? '' : 'mono';
                place(text, col + 2, end - col - 2);
            } else if (type === 'F4') {
                const el = document.createElement('button');
                el.className = 'f4';
                el.title = 'Werthilfe';
                el.innerHTML = '<svg width="19" height="20" viewBox="0 0 19 20"><path fill="#444" d="M0 0h8v19H0z"/><circle cx="10" cy="10" r="9" fill="#b9c2c8" stroke="#6d777d"/><path fill="#e9eff2" stroke="#444" d="M7 7h7v5H7zM5 9h6v5H5z"/></svg>';
                place(el, col, 2);
            }
        });
    });
}

renderRows(document.getElementById('head'), headRows);
positions.forEach(p => {
    const block = document.createElement('div');
    block.className = 'rows';
    document.getElementById('positions').appendChild(block);
    renderRows(block, positionRows(p));
    block.after(document.createElement('hr'));
});
```
